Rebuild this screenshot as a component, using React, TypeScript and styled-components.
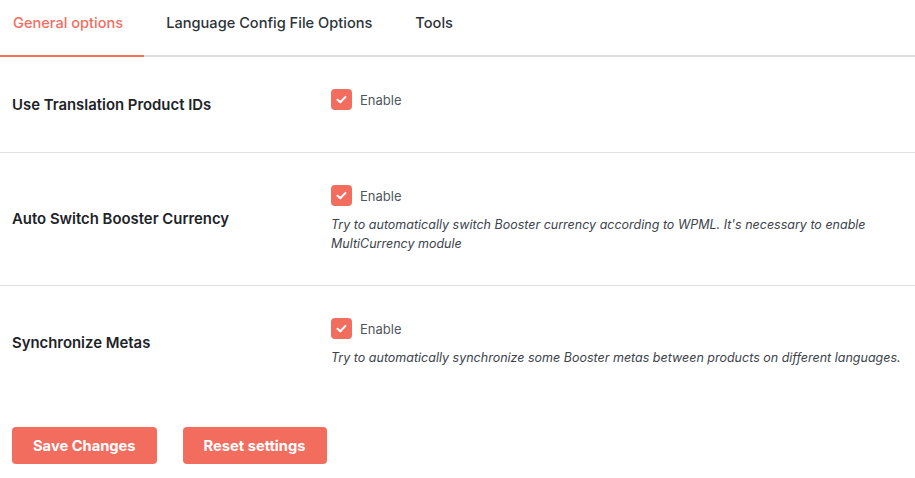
import React from "react";
import styled, { createGlobalStyle } from "styled-components";

const Global = createGlobalStyle`
  html, body { margin: 0; padding: 0; background: #fff; }
  body { font-family: Inter, "Noto Sans", sans-serif; color: #1d2327; }
  * { box-sizing: border-box; }
`;

const CORAL = "#f36d5f";

const Page = styled.div`
  width: 915px;
  background: #fff;
`;

const TabBar = styled.div`
  display: flex;
  border-bottom: 2px solid #dcdcdc;
  height: 57px;
`;

const Tab = styled.div<{ $active?: boolean; $first?: boolean }>`
  display: flex;
  align-items: center;
  height: 57px;
  margin-bottom: -2px;
  padding: 0 21px 9px ${(p) => (p.$first ? "13px" : "22px")};
  font-size: 14.6px;
  font-weight: 500;
  color: ${(p) => (p.$active ? CORAL : "#2c3338")};
  border-bottom: 2px solid ${(p) => (p.$active ? CORAL : "transparent")};
`;

const Row = styled.div<{ $last?: boolean }>`
  display: grid;
  grid-template-columns: 319px 1fr;
  align-items: center;
  padding: 32px 12px 32px 12px;
  border-bottom: ${(p) => (p.$last ? "none" : "1px solid #e2e2e2")};
`;

const Label = styled.div`
  font-size: 14.9px;
  font-weight: 600;
  color: #1d2327;
`;

const Control = styled.div<{ $pad?: boolean }>`
  display: flex;
  flex-direction: column;
  padding-bottom: ${(p) => (p.$pad ? "10px" : "0")};
`;

const CheckLine = styled.label`
  display: flex;
  align-items: center;
  gap: 8px;
  font-size: 13px;
  color: #50575e;
  height: 21px;
`;

const Box = styled.span`
  width: 21px;
  height: 21px;
  border-radius: 4px;
  background: ${CORAL};
  display: flex;
  align-items: center;
  justify-content: center;
`;

const Desc = styled.p`
  margin: 9px 0 0 0;
  font-size: 12.5px;
  font-style: italic;
  line-height: 19px;
  color: #3c434a;
`;

const Actions = styled.div`
  display: flex;
  gap: 26px;
  padding: 28px 12px 0 12px;
`;

const Button = styled.button`
  height: 37px;
  padding: 0 21px;
  border: none;
  border-radius: 4px;
  background: ${CORAL};
  color: #fff;
  font-family: Inter, "Noto Sans", sans-serif;
  font-size: 14.7px;
  font-weight: 700;
`;

const Check = () => (
  <Box>
    <svg width="13" height="13" viewBox="0 0 12 12" fill="none">
      <path d="M2.3 6.2 L4.9 8.6 L9.7 3.6" stroke="#fff" strokeWidth="1.9" strokeLinecap="round" strokeLinejoin="round" />
    </svg>
  </Box>
);

export default function App() {
  return (
    <Page>
      <Global />
      <TabBar>
        <Tab $active $first>General options</Tab>
        <Tab>Language Config File Options</Tab>
        <Tab>Tools</Tab>
      </TabBar>
      <Row>
        <Label>Use Translation Product IDs</Label>
        <Control $pad>
          <CheckLine><Check />Enable</CheckLine>
        </Control>
      </Row>
      <Row>
        <Label>Auto Switch Booster Currency</Label>
        <Control>
          <CheckLine><Check />Enable</CheckLine>
          <Desc>Try to automatically switch Booster currency according to WPML. It's necessary to enable MultiCurrency module</Desc>
        </Control>
      </Row>
      <Row $last>
        <Label>Synchronize Metas</Label>
        <Control>
          <CheckLine><Check />Enable</CheckLine>
          <Desc>Try to automatically synchronize some Booster metas between products on different languages.</Desc>
        </Control>
      </Row>
      <Actions>
        <Button>Save Changes</Button>
        <Button>Reset settings</Button>
      </Actions>
    </Page>
  );
}
